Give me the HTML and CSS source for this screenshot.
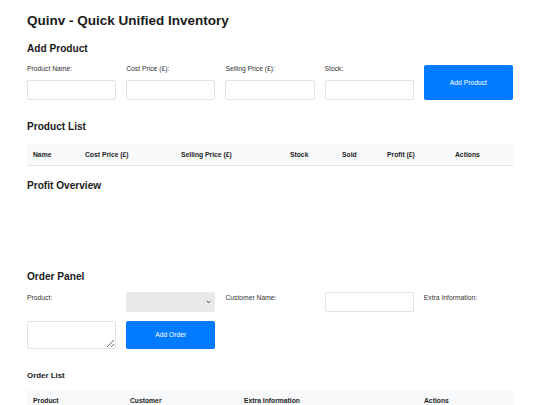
FILE: index.html
```html
<!DOCTYPE html>
<html lang="en">
<head>
    <meta charset="UTF-8">
    <meta name="viewport" content="width=device-width, initial-scale=1.0">
    <title>Quinv - Quick Unified Inventory</title>
    <link rel="stylesheet" href="styles.css">
</head>
<body>
    <div class="container">
        <h1>Quinv - Quick Unified Inventory</h1>

        <!-- Add Product -->
        <h2>Add Product</h2>
        <div class="product-form">
            <div class="field">
                <label for="productName">Product Name:</label>
                <input type="text" id="productName" class="text-input">
            </div>
            <div class="field">
                <label for="costPrice">Cost Price (£):</label>
                <input type="number" id="costPrice" class="text-input">
            </div>
            <div class="field">
                <label for="sellingPrice">Selling Price (£):</label>
                <input type="number" id="sellingPrice" class="text-input">
            </div>
            <div class="field">
                <label for="stock">Stock:</label>
                <input type="number" id="stock" class="text-input">
            </div>
            <button class="blue-button">Add Product</button>
        </div>

        <!-- Product List -->
        <h2>Product List</h2>
        <table class="data-table product-table">
            <thead>
                <tr>
                    <th>Name</th>
                    <th>Cost Price (£)</th>
                    <th>Selling Price (£)</th>
                    <th>Stock</th>
                    <th>Sold</th>
                    <th>Profit (£)</th>
                    <th>Actions</th>
                </tr>
            </thead>
            <tbody id="productTable"></tbody>
        </table>

        <!-- Profit Overview -->
        <h2>Profit Overview</h2>
        <div class="chart-area" id="profitChart"></div>

        <!-- Order Panel -->
        <h2 class="order-title">Order Panel</h2>
        <div class="order-form">
            <label for="orderProduct">Product:</label>
            <div class="select-wrap">
                <select id="orderProduct" class="select-input"></select>
                <svg class="select-arrow" width="5" height="4" viewBox="0 0 5 4">
                    <path d="M0.8 1 L2.5 2.7 L4.2 1" fill="none" stroke="#333" stroke-width="0.9"/>
                </svg>
            </div>
            <label for="customerName">Customer Name:</label>
            <input type="text" id="customerName" class="text-input">
            <label for="extraInfo">Extra Information:</label>
            <textarea id="extraInfo" class="text-area"></textarea>
            <button class="blue-button">Add Order</button>
        </div>

        <h3>Order List</h3>
        <table class="data-table order-table">
            <thead>
                <tr>
                    <th>Product</th>
                    <th>Customer</th>
                    <th>Extra Information</th>
                    <th>Actions</th>
                </tr>
            </thead>
            <tbody id="orderTable"></tbody>
        </table>
    </div>
</body>
</html>
```

FILE: styles.css
```css
* {
    margin: 0;
    padding: 0;
    box-sizing: border-box;
    font-family: 'Liberation Sans', Arial, Helvetica, sans-serif;
}

body {
    background-color: white;
    color: #222;
}

.container {
    padding: 12.5px 27px 0;
}

h1 {
    font-size: 13.5px;
    margin-bottom: 15px;
    color: #1a1a1a;
}

h2 {
    font-size: 10.125px;
    margin-bottom: 11.5px;
    color: #1a1a1a;
}

h3 {
    font-size: 7.9px;
    margin-bottom: 10px;
    color: #1a1a1a;
}

label {
    font-size: 6.75px;
    color: #333;
}

.product-form {
    display: grid;
    grid-template-columns: repeat(5, 1fr);
    column-gap: 10px;
    margin-bottom: 21.5px;
}

.field label {
    display: block;
    margin-bottom: 6.5px;
}

.text-input {
    width: 100%;
    height: 19.5px;
    border: 1px solid #e2e2e2;
    border-radius: 2px;
    outline: none;
    font-size: 6.75px;
    padding: 0 4px;
}

.blue-button {
    background-color: #007bff;
    color: white;
    border: none;
    border-radius: 2px;
    font-size: 6.75px;
    cursor: pointer;
}

.data-table {
    width: 100%;
    border-collapse: collapse;
    table-layout: fixed;
    margin-bottom: 14px;
}

.data-table th {
    background-color: #f8f9fa;
    border-bottom: 1px solid #e6e6e6;
    padding: 7px 6px;
    font-size: 6.75px;
    text-align: left;
    color: #222;
}

.product-table th:nth-child(1) { width: 52px; }
.product-table th:nth-child(2) { width: 96px; }
.product-table th:nth-child(3) { width: 109px; }
.product-table th:nth-child(4) { width: 52px; }
.product-table th:nth-child(5) { width: 45px; }
.product-table th:nth-child(6) { width: 68px; }
.product-table th:nth-child(7) { width: 64px; }

.order-table th:nth-child(1) { width: 97px; }
.order-table th:nth-child(2) { width: 114px; }
.order-table th:nth-child(3) { width: 180px; }
.order-table th:nth-child(4) { width: 95px; }

.chart-area {
    height: 57px;
    margin-bottom: 12px;
}

.order-title {
    margin-bottom: 9.5px;
}

.order-form {
    display: grid;
    grid-template-columns: repeat(5, 1fr);
    column-gap: 10px;
    row-gap: 9px;
    margin-bottom: 22.5px;
}

.order-form label {
    padding-top: 2.5px;
}

.order-form .text-input,
.select-input {
    height: 20px;
}

.select-wrap {
    position: relative;
}

.select-input {
    width: 100%;
    appearance: none;
    background-color: #e9e9e9;
    border: 1px solid #e9e9e9;
    border-radius: 2px;
    font-size: 6.75px;
    outline: none;
    display: block;
}

.select-arrow {
    position: absolute;
    right: 4px;
    top: 8px;
    pointer-events: none;
}

.text-area {
    width: 100%;
    height: 28px;
    border: 1px solid #e2e2e2;
    border-radius: 2px;
    outline: none;
    font-size: 6.75px;
}
```
